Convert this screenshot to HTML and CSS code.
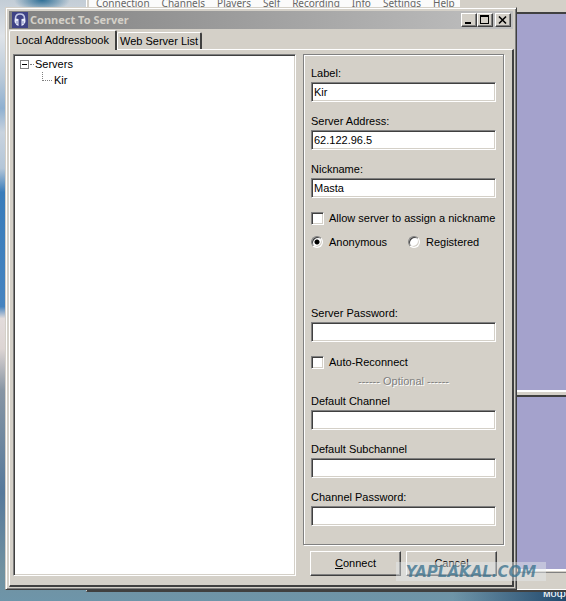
FILE: index.html
```html
<!DOCTYPE html>
<html lang="en">
<head>
<meta charset="utf-8">
<title>Connect To Server</title>
<link rel="stylesheet" href="styles.css">
</head>
<body>
<div class="desktop">
  <span class="desktop-label">мофо</span>
  <section class="app-window">
    <nav class="menu"><a href="#">Connection</a><a href="#">Channels</a><a href="#">Players</a><a href="#">Self</a><a href="#">Recording</a><a href="#">Info</a><a href="#">Settings</a><a href="#">Help</a></nav>
    <div class="pane pane-top"></div>
    <div class="pane pane-bottom"></div>
    <div class="status"></div>
  </section>

  <main class="dialog">
    <header class="titlebar">
      <svg class="app-icon" viewBox="0 0 16 16" aria-hidden="true">
        <rect width="16" height="16" fill="#3f4386"/>
        <path d="M3.500 9V6.500Q3.500 2 8 2T12.500 6.500V9" fill="none" stroke="#c3c9e8" stroke-width="1.600"/>
        <path d="M3 6.500l3.500.5v7L4.500 13 2.500 10zM13 6.500l-3.500.5v7l2-1 2-3z" fill="#e8ebfa"/>
        <path d="M5 9v3M11 9v3" stroke="#8088bd"/>
      </svg>
      <h1>Connect To Server</h1>
      <div class="caption-buttons">
        <button type="button" aria-label="Minimize"><svg viewBox="0 0 12 10"><path d="M2 8h6" stroke="#000" stroke-width="2"/></svg></button>
        <button type="button" aria-label="Maximize"><svg viewBox="0 0 12 10"><path d="M1.500 0v9M9.500 0v9M1 8.500h9" fill="none" stroke="#000"/><path d="M1 1h9" stroke="#000" stroke-width="2"/></svg></button>
        <button type="button" class="close" aria-label="Close"><svg viewBox="0 0 12 10"><path d="M2 1.500l7 7M9 1.500l-7 7" stroke="#000" stroke-width="1.600"/></svg></button>
      </div>
    </header>

    <div class="tabs" role="tablist">
      <button type="button" class="tab active" role="tab" aria-selected="true">Local Addressbook</button>
      <button type="button" class="tab" role="tab" aria-selected="false">Web Server List</button>
    </div>

    <div class="page">
      <div class="tree">
        <div class="node"><span class="toggle"></span><span class="dots"></span>Servers</div>
        <div class="node child"><span class="elbow"></span>Kir</div>
      </div>

      <form class="side">
        <div class="group">
          <div class="field"><label for="label">Label:</label><input id="label" type="text" value="Kir"></div>
          <div class="field"><label for="address">Server Address:</label><input id="address" type="text" value="62.122.96.5"></div>
          <div class="field"><label for="nick">Nickname:</label><input id="nick" type="text" value="Masta"></div>
          <div class="option"><input id="assign" type="checkbox"><label for="assign">Allow server to assign a nickname</label></div>
          <div class="radios">
            <div class="option"><input id="anon" type="radio" name="mode" checked><label for="anon">Anonymous</label></div>
            <div class="option"><input id="reg" type="radio" name="mode"><label for="reg">Registered</label></div>
          </div>
          <div class="field"><label for="password">Server Password:</label><input id="password" type="password"></div>
          <div class="option"><input id="auto" type="checkbox"><label for="auto">Auto-Reconnect</label></div>
          <div class="divider">------ Optional ------</div>
          <div class="field"><label for="channel">Default Channel</label><input id="channel" type="text"></div>
          <div class="field"><label for="subchannel">Default Subchannel</label><input id="subchannel" type="text"></div>
          <div class="field"><label for="chpass">Channel Password:</label><input id="chpass" type="password"></div>
        </div>
        <div class="actions">
          <button type="button"><span><u>C</u>onnect</span></button>
          <button type="button">Cancel</button>
        </div>
      </form>
    </div>
  </main>
  <div class="watermark">YAPLAKAL.COM</div>
</div>
</body>
</html>
```

FILE: styles.css
```css
* { box-sizing: border-box; }

:root {
  --face: #d4d0c8;
  --shadow: #808080;
  --dark: #404040;
}

body {
  margin: 0;
  font: 11px/16px "Liberation Sans", Arial, sans-serif;
  color: #000;
}

button, input { font: inherit; color: inherit; }

.desktop {
  position: relative;
  height: 100vh;
  min-height: 601px;
  overflow: hidden;
  background:
    radial-gradient(ellipse 28px 12px at 42px 0, #2f6f96, transparent),
    linear-gradient(to right, transparent 80%, #21486c) bottom / 100% 12px no-repeat,
    linear-gradient(#c3cdd6 0, #dfe3e8 6%, #b9c9d8 13%, #8fb0d0 18%, #c9d3de 22%, #b4c6d8 28%, #3a7cba 32%, #4684c0 51%, #e3dcdb 53%, #ddd5d3 58%, #8795a3 65%, #56799b 82%, #7191a0 95%, #6e95a9 100%);
}

.desktop-label {
  position: absolute;
  left: 543px;
  bottom: 1px;
  font-size: 11px;
  line-height: 13px;
  color: #fff;
}

/* Application window behind the dialog */
.app-window {
  position: absolute;
  inset: 0 0 9px 86px;
  display: flex;
  flex-direction: column;
  background: var(--face);
  border-left: 1px solid #fff;
  border-bottom: 2px solid var(--dark);
}

.menu {
  display: flex;
  gap: 12px;
  align-self: flex-start;
  height: 12px;
  padding: 0 5px 0 7px;
  background: #fbfbfb;
  border-left: 2px solid var(--face);
  font: 10px/12px "Noto Sans", Tahoma, sans-serif;
}

.menu a {
  height: 8px;
  line-height: 6px;
  color: #666;
  text-decoration: none;
}

.pane {
  background: #a4a2cc;
  border-top: 2px solid var(--dark);
  border-bottom: 2px solid #fff;
}

.pane-top { flex: 381 1 0; }
.pane-bottom { flex: 174 1 0; margin-top: 3px; }
.status { height: 18px; border-top: 1px solid var(--shadow); border-bottom: 1px solid #fff; margin-top: 1px; }

/* Dialog */
.dialog {
  position: absolute;
  inset: 7px 49px 11px 5px;
  display: flex;
  flex-direction: column;
  padding: 2px;
  background: var(--face);
  border: 1px solid;
  border-color: var(--face) var(--dark) var(--dark) var(--face);
  box-shadow: inset 1px 1px #fff, inset -1px -1px var(--shadow);
}

.titlebar {
  display: flex;
  align-items: center;
  height: 18px;
  margin: 1px 1px 0;
  padding: 0 2px 0 3px;
  background: linear-gradient(to right, #808080, #c0c0c0);
}

.app-icon { width: 16px; height: 16px; }

h1 {
  flex: 1;
  margin: 0 0 0 2px;
  font: bold 11px/16px "Noto Sans", Tahoma, sans-serif;
  color: #d4d0c8;
}

.caption-buttons { display: flex; }

.caption-buttons button {
  width: 16px;
  height: 14px;
  padding: 0;
  background: var(--face);
  border: 1px solid;
  border-color: #fff var(--dark) var(--dark) #fff;
  box-shadow: inset -1px -1px var(--shadow);
}

.caption-buttons .close { margin-left: 2px; }
.caption-buttons svg { display: block; width: 12px; height: 10px; margin: 1px; }

.tabs {
  display: flex;
  align-items: flex-end;
  height: 20px;
  margin-left: 1px;
}

.tab {
  height: 17px;
  padding: 0 2px;
  line-height: 15px;
  white-space: nowrap;
  background: var(--face);
  border: solid;
  border-width: 1px 2px 0 1px;
  border-color: #fff var(--dark) #fff #fff;
  border-radius: 2px 2px 0 0;
}

.tab.active {
  z-index: 1;
  height: 20px;
  margin-bottom: -1px;
  padding: 0 6px;
}

.page {
  flex: 1;
  display: flex;
  gap: 7px;
  min-height: 0;
  margin-left: 1px;
  padding: 4px 8px 9px 3px;
  border: solid;
  border-width: 1px 2px 2px 1px;
  border-color: #fff var(--dark) var(--dark) #fff;
}

.tree {
  flex: 1;
  padding: 1px 5px;
  background: #fff;
  border: 1px solid;
  border-color: var(--shadow) #fff #fff var(--shadow);
  box-shadow: inset 1px 1px var(--dark), inset -1px -1px var(--face);
}

.node { display: flex; align-items: center; height: 16px; }
.node.child { padding-left: 23px; }

.toggle {
  width: 9px;
  height: 9px;
  margin-left: 1px;
  border: 1px solid var(--shadow);
  background: linear-gradient(#000, #000) center / 5px 1px no-repeat;
}

.dots { width: 4px; margin: 0 1px; border-top: 1px dotted var(--shadow); }

.elbow {
  align-self: flex-start;
  width: 10px;
  height: 9px;
  margin-right: 2px;
  border: dotted var(--shadow);
  border-width: 0 0 1px 1px;
}

.side {
  display: flex;
  flex-direction: column;
  width: 201px;
}

.group {
  flex: 1;
  padding: 9px 7px 0;
  border: 1px solid var(--shadow);
  box-shadow: 1px 1px #fff, inset 1px 1px #fff;
}

.field { margin-bottom: 10px; }
.field label { display: block; height: 18px; line-height: 18px; }

.field input {
  display: block;
  width: 100%;
  height: 20px;
  padding: 0 2px;
  background: #fff;
  border: 1px solid;
  border-color: var(--shadow) #fff #fff var(--shadow);
  border-radius: 0;
  box-shadow: inset 1px 1px var(--dark), inset -1px -1px var(--face);
  outline: 0;
}

.option { display: flex; align-items: center; gap: 5px; height: 20px; white-space: nowrap; }

.option input {
  appearance: none;
  width: 13px;
  height: 13px;
  margin: 0;
  background: #fff;
  border: 1px solid;
  border-color: var(--shadow) #fff #fff var(--shadow);
  box-shadow: inset 1px 1px var(--dark), inset -1px -1px var(--face);
}

.option input[type="radio"] { width: 12px; height: 12px; margin-right: 1px; border-radius: 50%; }
.option input[type="radio"]:checked { background: radial-gradient(circle, #000 2px, #fff 3px); }

.radios {
  display: grid;
  grid-template-columns: 97px 1fr;
  margin: 4px 0 52px;
}

.divider {
  height: 16px;
  margin: 1px 0 3px;
  text-align: center;
  color: var(--shadow);
  text-shadow: 1px 1px #fff;
}

.actions {
  display: grid;
  grid-template-columns: 1fr 1fr;
  gap: 5px;
  margin-top: 6px;
  padding: 0 7px;
}

.actions button {
  height: 25px;
  padding: 0 0 2px;
  background: var(--face);
  border: 1px solid;
  border-color: #fff var(--dark) var(--dark) #fff;
  box-shadow: inset -1px -1px var(--shadow);
}

.watermark {
  position: absolute;
  right: 20px;
  bottom: 20px;
  width: 150px;
  height: 19px;
  background: rgba(230, 235, 238, .45);
  font: italic bold 15px/21px "DejaVu Sans", Verdana, sans-serif;
  text-align: center;
  color: rgba(62, 116, 143, .8);
}
```
